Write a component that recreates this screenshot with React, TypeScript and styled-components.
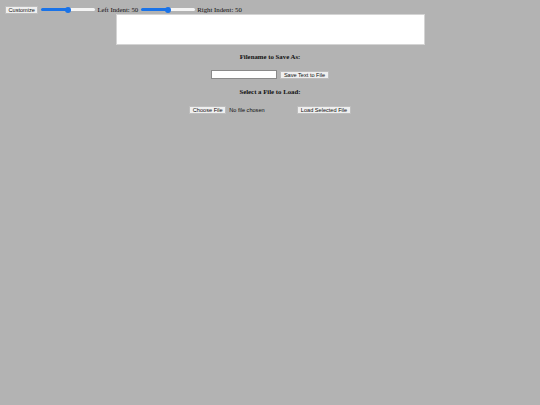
import React, { useState } from 'react'
import styled, { createGlobalStyle } from 'styled-components'

const GlobalStyle = createGlobalStyle`
  html, body {
    margin: 0;
    padding: 0;
    background: #b3b3b3;
  }
  body {
    font-family: 'Liberation Serif', 'Times New Roman', serif;
    color: #111;
  }
`

const Page = styled.div`
  width: 540px;
  min-height: 405px;
  background: #b3b3b3;
`

const Toolbar = styled.div`
  display: flex;
  align-items: center;
  height: 9px;
  padding: 5px 5px 0;
`

const SmallButton = styled.button`
  font-family: 'Liberation Sans', Arial, sans-serif;
  font-size: 5.6px;
  line-height: 6px;
  height: 8px;
  padding: 0 2.5px;
  margin: 0;
  color: #111;
  background: #efefef;
  border: 0.5px solid #bdbdbd;
  border-radius: 1px;
  white-space: nowrap;
`

const Slider = styled.input<{ $fill: number }>`
  appearance: none;
  -webkit-appearance: none;
  width: 54px;
  height: 3px;
  margin: 0 2px 0 3px;
  border-radius: 2px;
  background: linear-gradient(
    to right,
    #1a73e8 0%,
    #1a73e8 ${p => p.$fill}%,
    #f4f4f4 ${p => p.$fill}%,
    #f4f4f4 100%
  );
  outline: none;
  &::-webkit-slider-thumb {
    -webkit-appearance: none;
    width: 6px;
    height: 6px;
    border-radius: 50%;
    background: #1a73e8;
    border: none;
  }
`

const Label = styled.span`
  font-size: 6.8px;
  line-height: 8px;
  white-space: nowrap;
`

const Editor = styled.textarea`
  display: block;
  box-sizing: border-box;
  width: 309px;
  height: 31px;
  margin: 0 auto;
  border: 1px solid #d4d4d4;
  background: #fff;
  resize: none;
  padding: 1px;
  font-size: 6px;
`

const Heading = styled.div<{ $top: number }>`
  margin-top: ${p => p.$top}px;
  text-align: center;
  font-weight: bold;
  font-size: 6.8px;
  line-height: 8px;
`

const Row = styled.div<{ $top: number; $gap: number }>`
  display: flex;
  justify-content: center;
  align-items: center;
  gap: ${p => p.$gap}px;
  margin-top: ${p => p.$top}px;
  height: 9px;
`

const NameInput = styled.input`
  box-sizing: border-box;
  width: 66px;
  height: 9px;
  margin: 0;
  padding: 0 2px;
  font-size: 6px;
  background: #fff;
  border: 0.5px solid #8a8a8a;
`

const FilePicker = styled.input`
  font-family: 'Liberation Sans', Arial, sans-serif;
  font-size: 5.6px;
  width: 104px;
  color: #111;
  margin: 0;
  &::file-selector-button {
    font-family: 'Liberation Sans', Arial, sans-serif;
    font-size: 5.6px;
    height: 8px;
    line-height: 6px;
    padding: 0 2.5px;
    margin-right: 3px;
    color: #111;
    background: #efefef;
    border: 0.5px solid #bdbdbd;
    border-radius: 1px;
  }
`

export default function App() {
  const [left, setLeft] = useState(50)
  const [right, setRight] = useState(50)
  const [text, setText] = useState('')
  const [name, setName] = useState('')

  return (
    <Page>
      <GlobalStyle />
      <Toolbar>
        <SmallButton>Customize</SmallButton>
        <Slider
          type="range"
          min={0}
          max={100}
          value={left}
          $fill={left}
          onChange={e => setLeft(Number(e.target.value))}
        />
        <Label>Left Indent: {left}</Label>
        <Slider
          type="range"
          min={0}
          max={100}
          value={right}
          $fill={right}
          onChange={e => setRight(Number(e.target.value))}
        />
        <Label>Right Indent: {right}</Label>
      </Toolbar>
      <Editor value={text} onChange={e => setText(e.target.value)} />
      <Heading $top={8}>Filename to Save As:</Heading>
      <Row $top={9} $gap={3}>
        <NameInput value={name} onChange={e => setName(e.target.value)} />
        <SmallButton>Save Text to File</SmallButton>
      </Row>
      <Heading $top={9}>Select a File to Load:</Heading>
      <Row $top={9} $gap={4}>
        <FilePicker type="file" />
        <SmallButton>Load Selected File</SmallButton>
      </Row>
    </Page>
  )
}
